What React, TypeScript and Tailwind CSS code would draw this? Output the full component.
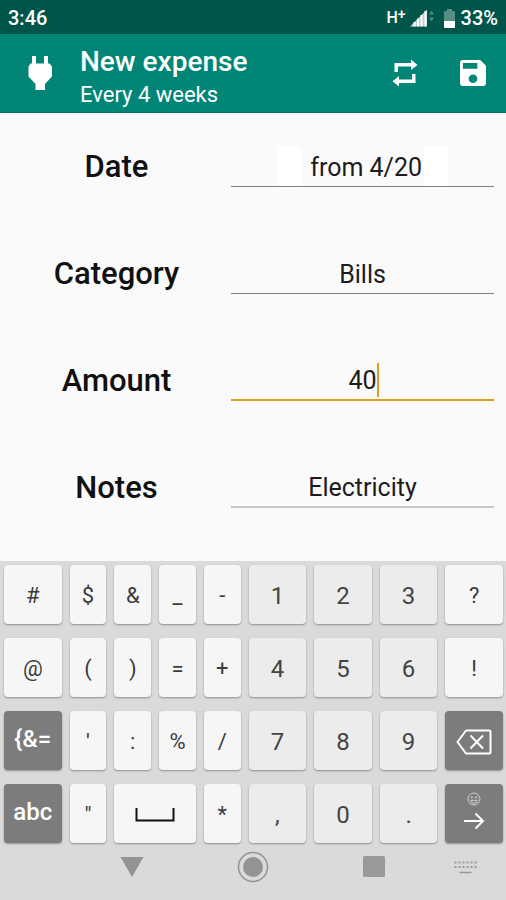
import type { ReactNode } from "react";
import clsx from "clsx";

type Tone = "light" | "number" | "dark";

interface KeyDef {
  label: string;
  content?: ReactNode;
  tone?: Tone;
  wide?: boolean;
}

const toneClasses: Record<Tone, string> = {
  light: "bg-[#f6f6f6] text-[#3c3c3c]",
  number: "bg-[#ececec] text-[#444444]",
  dark: "bg-[#7c7c7c] text-white font-medium",
};

function PlugIcon() {
  return (
    <svg viewBox="0 0 24 34" className="h-[34px] w-6" fill="currentColor">
      <path d="M4 0h4v7.500h8V0h4v7.500h1.500L24 10.500V20.500l-7 7.500v6H7.500v-6L0.500 20.500V10.500L2.500 7.500h1.500z" />
    </svg>
  );
}

function RepeatIcon() {
  return (
    <svg viewBox="0 0 26 28" className="h-7 w-[26px]" fill="currentColor">
      <path d="M2.500 13V4H19V0.500L25.500 6L19 11V7.500H6V13z" />
      <path d="M23.500 15V24H7V27.500L0.500 22.300L7 17V20.500H20V15z" />
    </svg>
  );
}

function SaveIcon() {
  return (
    <svg viewBox="3 3 18 18" className="h-[26px] w-[26px]" fill="currentColor">
      <path d="M17 3H5a2 2 0 0 0-2 2v14a2 2 0 0 0 2 2h14a2 2 0 0 0 2-2V7l-4-4zm-5 16a3 3 0 1 1 0-6 3 3 0 0 1 0 6zm3-10H5V5h10v4z" />
    </svg>
  );
}

function SignalIcon() {
  return (
    <svg viewBox="0 0 24 18" className="h-[18px] w-6">
      <path d="M0 17.500L17 0.500V17.500z" fill="#b9d3cf" />
      <path d="M4.500 13V17.500M8 9.500V17.500M11.500 6V17.500M15.500 2V17.500" stroke="#ffffff" strokeWidth="2" />
      <path d="M19 5.500L21.500 1.500L24 5.500zM19 8.500L21.500 12.500L24 8.500z" fill="#4f8a81" />
    </svg>
  );
}

function BatteryIcon() {
  return (
    <svg viewBox="0 0 11 19" className="h-[19px] w-[11px]">
      <path d="M3 0h5v2h2a1 1 0 0 1 1 1v9H0V3a1 1 0 0 1 1-1h2z" fill="#548e85" />
      <path d="M0 12h11v6a1 1 0 0 1-1 1H1a1 1 0 0 1-1-1z" fill="#ffffff" />
    </svg>
  );
}

function BackspaceIcon() {
  return (
    <svg viewBox="0 0 36 26" className="h-[26px] w-9" fill="none" stroke="currentColor" strokeWidth="2">
      <path d="M10 1.500H33.500a1 1 0 0 1 1 1V23.500a1 1 0 0 1-1 1H10L1.500 13z" strokeLinejoin="round" />
      <path d="M14.500 6.500L27 19.500M27 6.500L14.500 19.500" />
    </svg>
  );
}

function EnterIcon() {
  return (
    <span className="flex flex-col items-center gap-1.5 pb-2">
      <svg viewBox="0 0 14 14" className="h-3.5 w-3.5" fill="none" stroke="#d0d0d0">
        <circle cx="7" cy="7" r="6" />
        <circle cx="4.800" cy="5.300" r="0.700" />
        <circle cx="9.200" cy="5.300" r="0.700" />
        <path d="M3.500 8.300h7a3.500 3 0 0 1-7 0z" />
      </svg>
      <svg viewBox="0 0 22 18" className="h-[18px] w-[22px]" fill="none" stroke="currentColor" strokeWidth="2">
        <path d="M1 9H20M12.500 1.500L20 9L12.500 16.500" />
      </svg>
    </span>
  );
}

function SpaceIcon() {
  return (
    <svg viewBox="0 0 40 14" className="h-3.5 w-10" fill="none" stroke="#111111" strokeWidth="2">
      <path d="M1.500 0V12.500H38.500V0" />
    </svg>
  );
}

function KeyboardIcon() {
  return (
    <svg viewBox="0 0 23 13" className="h-[13px] w-[23px]" stroke="#999999" fill="none">
      <path d="M0.500 1.500H23M0.500 6H23" strokeWidth="2" strokeDasharray="2 2" />
      <path d="M5.500 11.500H17.500" strokeWidth="1.500" />
    </svg>
  );
}

const keys: KeyDef[] = [
  { label: "#" },
  { label: "$" },
  { label: "&" },
  { label: "_" },
  { label: "-" },
  { label: "1", tone: "number" },
  { label: "2", tone: "number" },
  { label: "3", tone: "number" },
  { label: "?" },
  { label: "@" },
  { label: "(" },
  { label: ")" },
  { label: "=" },
  { label: "+" },
  { label: "4", tone: "number" },
  { label: "5", tone: "number" },
  { label: "6", tone: "number" },
  { label: "!" },
  { label: "{&=", tone: "dark" },
  { label: "'" },
  { label: ":" },
  { label: "%" },
  { label: "/" },
  { label: "7", tone: "number" },
  { label: "8", tone: "number" },
  { label: "9", tone: "number" },
  { label: "Backspace", tone: "dark", content: <BackspaceIcon /> },
  { label: "abc", tone: "dark" },
  { label: '"' },
  { label: "Space", wide: true, content: <SpaceIcon /> },
  { label: "*" },
  { label: ",", tone: "number" },
  { label: "0", tone: "number" },
  { label: ".", tone: "number" },
  { label: "Enter", tone: "dark", content: <EnterIcon /> },
];

function Key({ label, content, tone = "light", wide }: KeyDef) {
  return (
    <button
      type="button"
      aria-label={label}
      className={clsx(
        "flex h-[59px] items-center justify-center rounded pt-0.5 shadow-[0_1px_2px_rgba(0,0,0,0.35)]",
        tone === "light" ? "text-[22px]" : "text-2xl",
        tone === "dark" && !content && "pb-1.5",
        wide && "col-span-2",
        toneClasses[tone]
      )}
    >
      {content ?? label}
    </button>
  );
}

interface FieldProps {
  id: string;
  label: string;
  children: ReactNode;
}

function Field({ id, label, children }: FieldProps) {
  return (
    <div className="grid h-[107px] grid-cols-[231fr_263fr] items-center pr-3">
      <label htmlFor={id} className="pt-0.5 pl-0.5 text-center text-[31px] font-medium text-[#111111]">
        {label}
      </label>
      {children}
    </div>
  );
}

const inputClasses = "h-10 w-full bg-transparent pt-0.5 text-center text-[25px] text-[#1c1c1c] outline-none";

export default function App() {
  return (
    <div className="flex min-h-screen flex-col bg-[#fafafa] font-['Roboto',sans-serif]">
      <div className="flex h-[34px] items-center justify-between bg-[#00554a] px-2 pt-0.5 text-xl font-medium text-white">
        <span>3:46</span>
        <div className="flex items-center">
          <span className="text-base">H</span>
          <span className="mr-1 pb-2 text-sm">+</span>
          <SignalIcon />
          <span className="mr-1.5 ml-2.5">
            <BatteryIcon />
          </span>
          <span>33%</span>
        </div>
      </div>

      <header className="flex h-[79px] items-center border-b border-[#007466] bg-[#008577] pr-5 pl-7 text-white">
        <PlugIcon />
        <div className="ml-7 flex-1 pt-2">
          <h1 className="text-[28px] leading-9 font-medium">New expense</h1>
          <p className="text-[22px] leading-[30px]">Every 4 weeks</p>
        </div>
        <button type="button" aria-label="Repeat" className="mr-[42px]">
          <RepeatIcon />
        </button>
        <button type="button" aria-label="Save">
          <SaveIcon />
        </button>
      </header>

      <form className="flex-1 pb-5">
        <Field id="date" label="Date">
          <div className="flex justify-center border-b border-[#808080]">
            <span className="w-6 bg-white" />
            <input
              id="date"
              type="text"
              defaultValue="from 4/20"
              className="h-10 w-[123px] pt-0.5 pr-0.5 text-right text-[25px] text-[#1c1c1c] outline-none"
            />
            <span className="w-6 bg-white" />
          </div>
        </Field>
        <Field id="category" label="Category">
          <input id="category" type="text" defaultValue="Bills" className={clsx(inputClasses, "border-b border-[#808080]")} />
        </Field>
        <Field id="amount" label="Amount">
          <div className="relative">
            <input
              id="amount"
              type="text"
              inputMode="numeric"
              defaultValue="40"
              className={clsx(inputClasses, "border-b-2 border-[#e09c20] caret-[#e09c20]")}
            />
            <span className="absolute top-0.5 left-1/2 ml-3.5 h-[34px] w-0.5 bg-[#e09c20]" />
          </div>
        </Field>
        <Field id="notes" label="Notes">
          <input id="notes" type="text" defaultValue="Electricity" className={clsx(inputClasses, "border-b-2 border-[#c8c8c8]")} />
        </Field>
      </form>

      <section className="bg-[#dadada] pt-1">
        <div className="grid grid-cols-[58fr_37fr_37fr_37fr_37fr_58fr_58fr_58fr_58fr] gap-x-2 gap-y-3.5 pr-[3px] pl-1">
          {keys.map((key) => (
            <Key key={key.label} {...key} />
          ))}
        </div>
        <nav className="grid h-[57px] grid-cols-[72px_1fr_1fr_1fr_72px] items-start pt-2">
          <span />
          <button type="button" aria-label="Back" className="flex h-8 items-center justify-center">
            <svg viewBox="0 0 24 20" className="h-5 w-6" fill="#939393">
              <path d="M0.500 0H23.500L12 20z" />
            </svg>
          </button>
          <button type="button" aria-label="Home" className="flex h-8 items-center justify-center">
            <svg viewBox="0 0 32 32" className="h-8 w-8">
              <circle cx="16" cy="16" r="14.500" fill="none" stroke="#939393" strokeWidth="1.500" />
              <circle cx="16" cy="16" r="10" fill="#939393" />
            </svg>
          </button>
          <button type="button" aria-label="Recent apps" className="flex h-8 items-center justify-center">
            <svg viewBox="0 0 22 22" className="h-[22px] w-[22px]">
              <rect width="22" height="21" rx="1.500" fill="#999999" />
            </svg>
          </button>
          <button type="button" aria-label="Switch keyboard" className="flex h-8 items-center pl-5">
            <KeyboardIcon />
          </button>
        </nav>
      </section>
    </div>
  );
}
